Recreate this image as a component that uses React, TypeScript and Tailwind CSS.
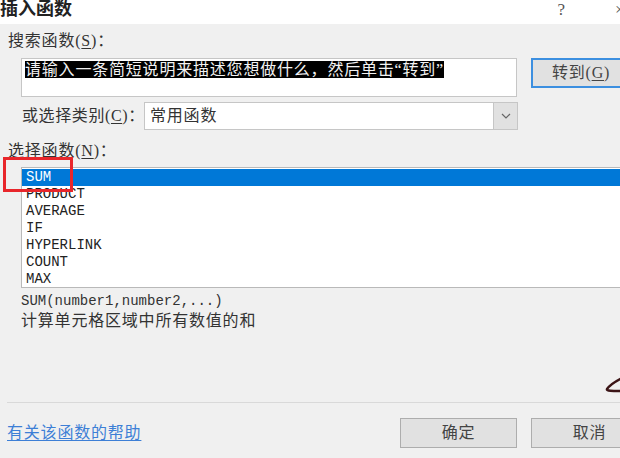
const cjk = { fontFamily: '"Liberation Serif", "Noto Sans CJK SC", serif' };
const mono = { fontFamily: '"Liberation Mono", "Noto Sans CJK SC", monospace' };

const functions = ["SUM", "PRODUCT", "AVERAGE", "IF", "HYPERLINK", "COUNT", "MAX"];

function Key({ k }: { k: string }) {
  return (
    <>
      (<span className="underline underline-offset-2">{k}</span>)
    </>
  );
}

function DialogButton({ label, focused }: { label: React.ReactNode; focused?: boolean }) {
  return (
    <button
      className={
        "flex h-[30px] w-full items-center justify-center whitespace-nowrap bg-[#e1e1e1] text-[16px] leading-5 tracking-[0.8px] text-[#444] " +
        (focused ? "border-2 border-[#3c8fe0]" : "border border-[#adadad]")
      }
    >
      {label}
    </button>
  );
}

export default function App() {
  return (
    <div
      className="relative flex h-[458px] w-[620px] flex-col overflow-hidden bg-[#f0f0f0] text-[#333]"
      style={cjk}
    >
      {/* title bar */}
      <div className="flex h-6 shrink-0 items-start justify-between overflow-hidden bg-white">
        <span className="-mt-[3px] text-[18px] font-bold leading-6 text-[#222]">插入函数</span>
        <div className="flex items-start gap-[50px] text-[17px] leading-5 text-[#555]">
          <span>?</span>
          <span className="-mr-[3px] w-[8px] overflow-hidden">×</span>
        </div>
      </div>

      {/* search */}
      <div className="ml-2 mt-[7px] h-5 whitespace-nowrap text-[16px] leading-5 tracking-[0.8px]">
        搜索函数<Key k="S" />：
      </div>
      <div className="mt-[7px] flex items-start gap-[14px]">
        <div className="ml-[21px] h-[39px] w-[496px] shrink-0 border border-[#c6c6c6] bg-white px-[3px] pt-[1px] leading-[19px]">
          <span className="whitespace-nowrap bg-black text-[16px] leading-[19px] tracking-[0.8px] text-[#f2f2f2]">
            请输入一条简短说明来描述您想做什么，然后单击“转到”
          </span>
        </div>
        <div className="w-[100px] shrink-0">
          <DialogButton
            focused
            label={
              <>
                转到<Key k="G" />
              </>
            }
          />
        </div>
      </div>

      {/* category */}
      <div className="mt-[5px] flex h-[28px] items-center">
        <div className="ml-[22px] w-[122px] shrink-0 whitespace-nowrap text-[16px] leading-5 tracking-[0.6px]">
          或选择类别<Key k="C" />：
        </div>
        <div className="flex h-[28px] w-[374px] shrink-0 items-stretch border border-[#c6c6c6] bg-white">
          <div className="flex flex-1 items-center pl-[5px] text-[16px] leading-5 tracking-[0.8px]">常用函数</div>
          <div className="flex w-[24px] items-center justify-center border-l border-[#c6c6c6] bg-[#e1e1e1]">
            <svg width="10" height="6" viewBox="0 0 10 6" fill="none">
              <path d="M1 1l4 4 4-4" stroke="#666" strokeWidth="1.2" />
            </svg>
          </div>
        </div>
      </div>

      {/* function list */}
      <div className="ml-2 mt-[11px] h-5 whitespace-nowrap text-[16px] leading-5 tracking-[0.8px]">
        选择函数<Key k="N" />：
      </div>
      <div className="ml-[21px] mt-[6px] h-[121px] w-[620px] shrink-0 border border-[#b9b9b9] bg-white pt-[1px]">
        {functions.map((f, i) => (
          <div
            key={f}
            className={
              "h-[17px] pl-[4px] text-[14px] leading-[17px] " +
              (i === 0 ? "bg-[#0078d7] text-white" : "text-[#222]")
            }
            style={mono}
          >
            {f}
          </div>
        ))}
      </div>
      <div className="pointer-events-none absolute left-[3px] top-[157px] h-[35px] w-[70px] border-[3px] border-[#e8262b]" />

      {/* description */}
      <div className="ml-[21px] mt-[3px] h-5 text-[14px] leading-5 text-[#333]" style={mono}>
        SUM(number1,number2,...)
      </div>
      <div className="ml-[21px] h-5 whitespace-nowrap text-[16px] leading-5 tracking-[0.8px] text-[#333]">
        计算单元格区域中所有数值的和
      </div>

      {/* separator */}
      <div className="ml-[7px] mt-[71px] h-px shrink-0 bg-[#d9d9d9]" />

      {/* bottom row */}
      <div className="mt-[15px] flex h-[30px] items-center">
        <span className="ml-[7px] w-[393px] shrink-0 whitespace-nowrap text-[16px] leading-5 tracking-[0.8px] text-[#3d7fd6] underline underline-offset-2">
          有关该函数的帮助
        </span>
        <div className="flex gap-[14px]">
          <div className="w-[117px] shrink-0">
            <DialogButton label="确定" />
          </div>
          <div className="w-[117px] shrink-0">
            <DialogButton label="取消" />
          </div>
        </div>
      </div>

      {/* pen scribble */}
      <svg className="absolute left-[600px] top-[372px]" width="20" height="26" viewBox="0 0 20 26" fill="none">
        <path d="M22 6 C14 10 9 14 7 17 C6 19 12 19 22 19" stroke="#3b1416" strokeWidth="2.4" strokeLinecap="round" />
      </svg>
    </div>
  );
}
